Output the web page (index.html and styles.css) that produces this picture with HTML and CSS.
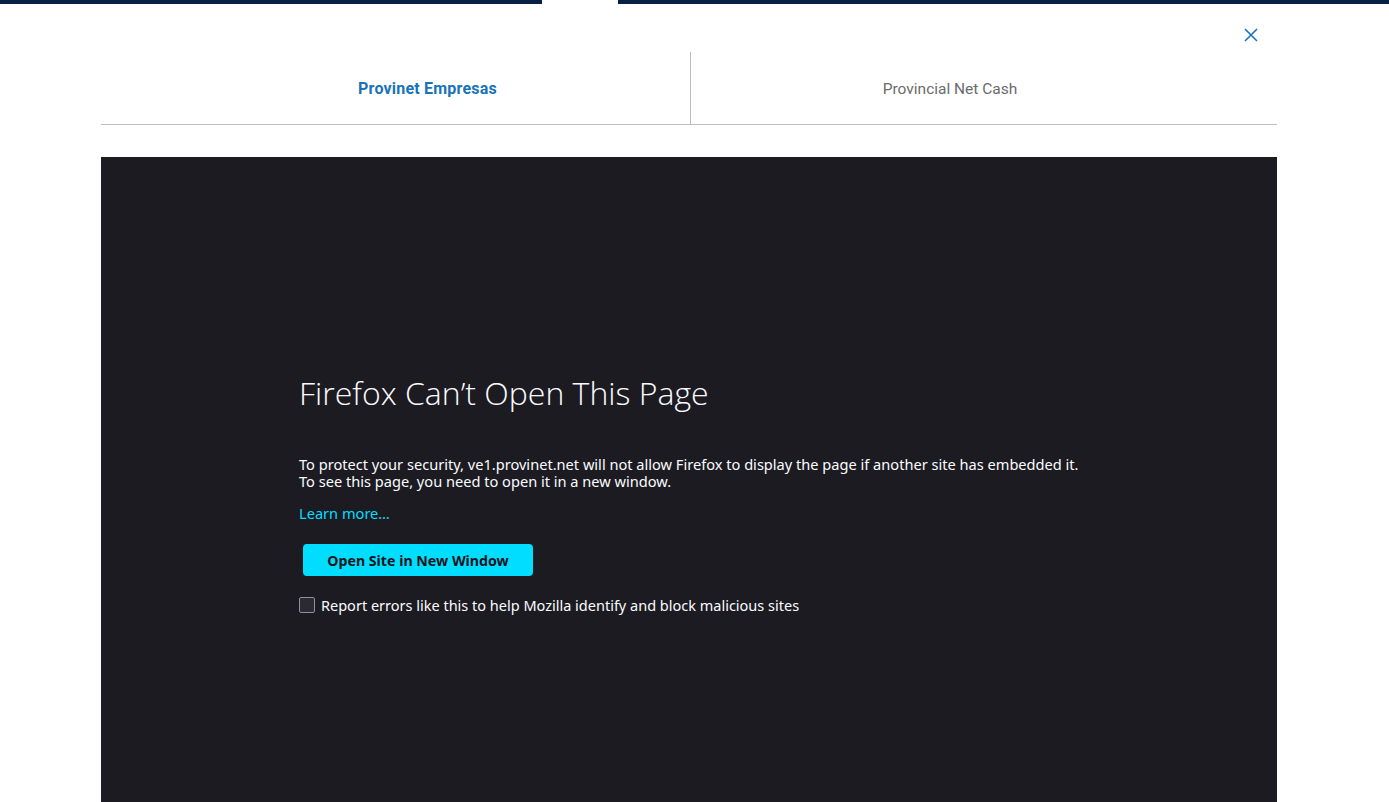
FILE: index.html
```html
<!DOCTYPE html>
<html>
<head>
<meta charset="utf-8">
<link rel="stylesheet" href="styles.css">
</head>
<body>
<div class="topbar"><span class="seg seg-left"></span><span class="seg-gap"></span><span class="seg seg-right"></span></div>
<div class="modal">
  <div class="close-row">
    <button class="close" aria-label="Cerrar">
      <svg width="14" height="14" viewBox="0 0 14 14"><path d="M1 1 L13 13 M13 1 L1 13" stroke="#1a73c2" stroke-width="1.6" fill="none"/></svg>
    </button>
  </div>
  <div class="tabs">
    <div class="tab active">Provinet Empresas</div>
    <div class="tab inactive">Provincial Net Cash</div>
  </div>
  <div class="frame">
    <div class="error">
      <h1 class="title">Firefox Can’t Open This Page</h1>
      <p class="desc"><span class="line">To protect your security, ve1.provinet.net will not allow Firefox to display the page if another site has embedded it.</span><span class="line">To see this page, you need to open it in a new window.</span></p>
      <a class="learn">Learn more…</a>
      <button class="open-btn">Open Site in New Window</button>
      <label class="report"><span class="box"></span>Report errors like this to help Mozilla identify and block malicious sites</label>
    </div>
  </div>
</div>
</body>
</html>
```
FILE: styles.css
```css
html, body {
  margin: 0;
  padding: 0;
  background: #ffffff;
  height: 802px;
  overflow: hidden;
}
.topbar {
  display: flex;
  height: 4px;
}
.seg { background: #072146; height: 4px; }
.seg-left { width: 542px; }
.seg-gap { width: 76px; }
.seg-right { flex: 1; }

.modal {
  margin: 0 112px 0 101px;
  display: flex;
  flex-direction: column;
}
.close-row {
  display: flex;
  justify-content: flex-end;
  height: 48px;
}
.close {
  border: 0;
  background: none;
  padding: 0;
  width: 14px;
  height: 14px;
  margin-top: 24px;
  margin-right: 19px;
  display: flex;
}
.tabs {
  display: flex;
  height: 72px;
  border-bottom: 1px solid #bdbdbd;
  font-family: Roboto, "Liberation Sans", sans-serif;
  font-size: 16px;
}
.tab {
  flex: 1;
  display: flex;
  align-items: center;
  justify-content: center;
  color: #6b6b6b;
  padding-top: 1px;
}
.tab.active {
  color: #1973b8;
  font-weight: 700;
  border-right: 1px solid #bdbdbd;
  flex: 0 0 590px;
  padding-left: 64px;
  box-sizing: border-box;
  letter-spacing: 0.2px;
}
.tab.inactive {
  padding-right: 68px;
  font-size: 15.5px;
}
.frame {
  margin-top: 32px;
  background: #1c1b22;
  height: 645px;
  font-family: "Noto Sans", "Open Sans", sans-serif;
  color: #fbfbfe;
}
.error {
  padding: 216px 0 0 198px;
  display: flex;
  flex-direction: column;
  align-items: flex-start;
}
.title {
  margin: 0;
  font-family: "Open Sans", sans-serif;
  font-weight: 300;
  font-size: 32px;
  line-height: 40px;
  color: #fbfbfe;
}
.desc {
  margin: 43px 0 0;
  font-size: 14.6px;
  line-height: 17px;
  display: flex;
  flex-direction: column;
}
.line {
  display: block;
  height: 17px;
}
.learn {
  margin-top: 15px;
  font-size: 14.6px;
  line-height: 17px;
  color: #00ddff;
}
.open-btn {
  margin: 22px 0 0 4px;
  width: 230px;
  height: 32px;
  border: 0;
  border-radius: 4px;
  background: #00ddff;
  color: #15141a;
  font-family: "Noto Sans", "Open Sans", sans-serif;
  font-weight: 700;
  font-size: 14.2px;
}
.report {
  margin-top: 20px;
  display: flex;
  align-items: center;
  font-size: 14.5px;
  line-height: 18px;
}
.box {
  width: 14px;
  height: 14px;
  border: 1px solid #8f8f9d;
  border-radius: 2px;
  background: #2b2a33;
  margin-right: 6px;
}
```
